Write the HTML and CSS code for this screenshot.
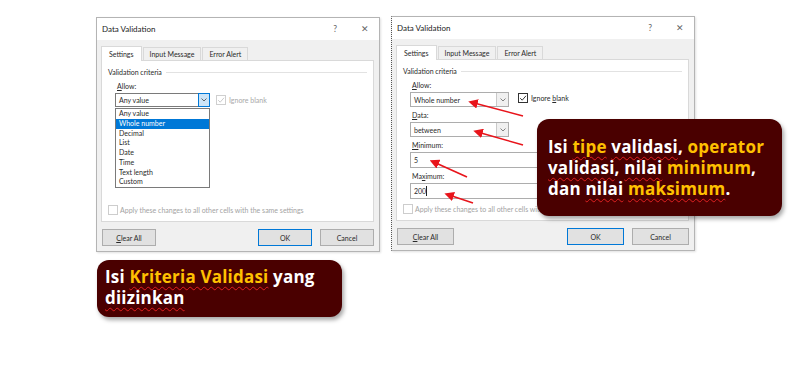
FILE: index.html
```html
<!DOCTYPE html>
<html lang="id">
<head>
    <meta charset="UTF-8">
    <meta name="viewport" content="width=device-width, initial-scale=1.0">
    <title>Data Validation</title>
    <link rel="stylesheet" href="styles.css">
</head>
<body>
<div class="page">
    <div class="left-col">
        <section class="dialog dialog-left">
            <header class="titlebar">
                <span class="title">Data Validation</span>
                <span class="title-btns"><span>?</span><span>&#x2715;</span></span>
            </header>
            <div class="dialog-body">
                <nav class="tabs">
                    <span class="tab active">Settings</span>
                    <span class="tab">Input Message</span>
                    <span class="tab">Error Alert</span>
                </nav>
                <div class="panel">
                    <div class="group-title"><span>Validation criteria</span><i></i></div>
                    <div class="fields">
                        <div class="label"><u>A</u>llow:</div>
                        <div class="row">
                            <div class="combo">
                                <div class="select open">
                                    <span>Any value</span>
                                    <span class="drop"><svg width="6" height="4" viewBox="0 0 6 4"><path d="M0.5 0.5 L3 3 L5.5 0.5" fill="none" stroke="#444" stroke-width="0.8"/></svg></span>
                                </div>
                                <ul class="listbox">
                                    <li>Any value</li>
                                    <li class="selected">Whole number</li>
                                    <li>Decimal</li>
                                    <li>List</li>
                                    <li>Date</li>
                                    <li>Time</li>
                                    <li>Text length</li>
                                    <li>Custom</li>
                                </ul>
                            </div>
                            <label class="check disabled">
                                <span class="box"><svg width="8" height="8" viewBox="0 0 8 8"><path d="M1.2 4.2 L3.2 6.2 L7 1.8" fill="none" stroke="#c4c4c4" stroke-width="0.9"/></svg></span>
                                <span>Ignore blank</span>
                            </label>
                        </div>
                    </div>
                    <div class="apply"><span class="box"></span><span>Apply these changes to all other cells with the same settings</span></div>
                </div>
                <div class="buttons">
                    <button class="btn"><u>C</u>lear All</button>
                    <span class="spacer"></span>
                    <button class="btn primary">OK</button>
                    <button class="btn">Cancel</button>
                </div>
            </div>
        </section>

        <div class="callout callout-left">
            Isi <span class="hl typo">Kriteria Validasi</span> yang<br>
            <span class="typo">diizinkan</span>
        </div>
    </div>

    <section class="dialog dialog-right">
        <header class="titlebar">
            <span class="title">Data Validation</span>
            <span class="title-btns"><span>?</span><span>&#x2715;</span></span>
        </header>
        <div class="dialog-body">
            <nav class="tabs">
                <span class="tab active">Settings</span>
                <span class="tab">Input Message</span>
                <span class="tab">Error Alert</span>
            </nav>
            <div class="panel">
                <div class="group-title"><span>Validation criteria</span><i></i></div>
                <div class="fields">
                    <div class="label"><u>A</u>llow:</div>
                    <div class="row">
                        <div class="select">
                            <span>Whole number</span>
                            <span class="drop"><svg width="6" height="4" viewBox="0 0 6 4"><path d="M0.5 0.5 L3 3 L5.5 0.5" fill="none" stroke="#666" stroke-width="0.8"/></svg></span>
                        </div>
                        <label class="check">
                            <span class="box"><svg width="8" height="8" viewBox="0 0 8 8"><path d="M1.2 4.2 L3.2 6.2 L7 1.8" fill="none" stroke="#222" stroke-width="0.9"/></svg></span>
                            <span>Ignore <u>b</u>lank</span>
                        </label>
                    </div>
                    <div class="label"><u>D</u>ata:</div>
                    <div class="select">
                        <span>between</span>
                        <span class="drop"><svg width="6" height="4" viewBox="0 0 6 4"><path d="M0.5 0.5 L3 3 L5.5 0.5" fill="none" stroke="#666" stroke-width="0.8"/></svg></span>
                    </div>
                    <div class="label"><u>M</u>inimum:</div>
                    <div class="input">5</div>
                    <div class="label">Ma<u>x</u>imum:</div>
                    <div class="input">200<span class="caret"></span></div>
                </div>
                <div class="apply"><span class="box"></span><span>Apply these changes to all other cells with the same settings</span></div>
            </div>
            <div class="buttons">
                <button class="btn"><u>C</u>lear All</button>
                <span class="spacer"></span>
                <button class="btn primary">OK</button>
                <button class="btn">Cancel</button>
            </div>
        </div>
    </section>

    <div class="callout callout-right">
        Isi <span class="hl typo">tipe</span> <span class="typo">validasi</span>, <span class="hl">operator</span><br>
        <span class="typo">validasi</span>, <span class="typo">nilai</span> <span class="hl">minimum</span>,<br>
        dan <span class="typo">nilai</span> <span class="hl typo">maksimum</span>.
    </div>

    <!-- red pointer arrows drawn over the right dialog -->
    <svg class="arrows" width="791" height="368" viewBox="0 0 791 368">
        <defs>
            <marker id="head" markerWidth="6" markerHeight="6" refX="1" refY="3" orient="auto" markerUnits="strokeWidth">
                <path d="M0 0 L6 3 L0 6 Z" fill="#e8141b"/>
            </marker>
        </defs>
        <g stroke="#e8141b" stroke-width="1.6" marker-end="url(#head)">
            <line x1="523" y1="116" x2="476" y2="103.5"/>
            <line x1="523" y1="145" x2="481" y2="133"/>
            <line x1="467" y1="177" x2="437" y2="163.5"/>
            <line x1="473" y1="203" x2="452" y2="196"/>
        </g>
    </svg>
</div>
</body>
</html>
```

FILE: styles.css
```css
* {
    box-sizing: border-box;
}
body {
    margin: 0;
    background: #fff;
    font-family: Lato, "Noto Sans", sans-serif;
}
.page {
    position: relative;
    width: 791px;
    height: 368px;
    padding: 17px 0 0 96px;
    display: flex;
    align-items: flex-start;
    gap: 11px;
}
.left-col {
    display: flex;
    flex-direction: column;
    gap: 8px;
}

/* dialog window */
.dialog {
    border: 1px solid #b4b4b4;
    background: #f0f0f0;
    font-size: 7px;
    color: #2a2a2a;
    box-shadow: 1px 1px 2px rgba(0, 0, 0, 0.12);
}
.dialog-left {
    width: 284px;
}
.dialog-right {
    width: 304px;
    margin-top: -1px;
    border-left: 1px dotted #555;
}
.titlebar {
    height: 22px;
    background: #fff;
    display: flex;
    align-items: center;
    justify-content: space-between;
    padding: 0 10px 0 5px;
}
.title {
    font-size: 8px;
    color: #222;
}
.title-btns {
    display: flex;
    gap: 24px;
    font-size: 8.5px;
    color: #666;
}
.dialog-body {
    padding: 6px 5px 5px 4px;
}
.tabs {
    display: flex;
    align-items: flex-end;
    height: 14px;
}
.tab {
    height: 13px;
    line-height: 12px;
    padding: 0 6px;
    border: 1px solid #d9d9d9;
    border-bottom: none;
    margin-right: 1px;
    background: #f0f0f0;
}
.tab.active {
    position: relative;
    z-index: 1;
    height: 15px;
    line-height: 14px;
    margin-bottom: -1px;
    background: #fff;
    padding: 0 7px;
}
.panel {
    height: 162px;
    background: #fff;
    border: 1px solid #d9d9d9;
    display: flex;
    flex-direction: column;
    padding: 5px 6px 6px 0;
}
.group-title {
    display: flex;
    align-items: center;
    gap: 4px;
    height: 12px;
    padding-left: 6px;
}
.group-title i {
    flex: 1;
    height: 1px;
    background: #e2e2e2;
}
.fields {
    padding-left: 13px;
}
.label {
    margin-top: 3px;
    line-height: 10px;
    padding-left: 2px;
    margin-bottom: 2px;
}
.row {
    display: flex;
    align-items: center;
    gap: 6px;
}
.combo {
    position: relative;
}
.select {
    width: 99px;
    height: 15px;
    border: 1px solid #adadad;
    background: #fff;
    display: flex;
    align-items: center;
    padding-left: 3px;
}
.dialog-left .select {
    width: 95px;
    height: 14px;
    border-color: #7a7a7a;
}
.drop {
    margin-left: auto;
    width: 12px;
    height: 100%;
    border-left: 1px solid #c9c9c9;
    background: #f0f0f0;
    display: flex;
    align-items: center;
    justify-content: center;
}
.select.open .drop {
    background: #cce4f7;
    border: 1px solid #0078d7;
    height: calc(100% + 2px);
    margin-right: -1px;
}
.listbox {
    position: absolute;
    left: 0;
    top: 15px;
    width: 95px;
    margin: 0;
    padding: 0;
    list-style: none;
    border: 1px solid #7a7a7a;
    background: #fff;
    z-index: 2;
}
.listbox li {
    line-height: 9.75px;
    padding-left: 3px;
}
.listbox li.selected {
    background: #0078d7;
    color: #fff;
}
.input {
    width: 271px;
    height: 16px;
    border: 1px solid #adadad;
    display: flex;
    align-items: center;
    padding-left: 3px;
}
.caret {
    width: 1px;
    height: 10px;
    background: #222;
}
.check {
    display: flex;
    align-items: center;
    gap: 3px;
}
.box {
    width: 10px;
    height: 10px;
    border: 1px solid #333;
    background: #fff;
    display: flex;
    align-items: center;
    justify-content: center;
}
.check.disabled {
    color: #a8a8a8;
}
.check.disabled .box {
    border-color: #cfcfcf;
}
.dialog-right .check {
    margin-left: 3px;
    margin-top: -4px;
}
.apply {
    margin-top: auto;
    display: flex;
    align-items: center;
    gap: 2px;
    padding-left: 6px;
    color: #a3a3a3;
}
.apply .box {
    border-color: #cdcdcd;
}
.buttons {
    display: flex;
    gap: 8px;
    margin-top: 7px;
    padding-left: 1px;
}
.spacer {
    flex: 1;
}
.btn {
    width: 54px;
    height: 17px;
    border: 1px solid #adadad;
    background: #e1e1e1;
    font: inherit;
    color: #2a2a2a;
    padding: 0;
}
.dialog-right .btn {
    width: 57px;
}
.btn.primary {
    border-color: #0078d7;
}

/* callouts */
.callout {
    background: #4a0000;
    color: #fff;
    font-family: "Open Sans", sans-serif;
    font-weight: 700;
    font-size: 17px;
    letter-spacing: 0.2px;
    line-height: 21px;
    white-space: nowrap;
    border-radius: 12px;
    box-shadow: 2px 3px 4px rgba(0, 0, 0, 0.35);
}
.callout-left {
    width: 245px;
    height: 57px;
    margin-left: 1px;
    padding: 6px 8px;
}
.callout-right {
    position: absolute;
    left: 537px;
    top: 119px;
    width: 245px;
    height: 97px;
    padding: 17px 11px;
}
.hl {
    color: #ffc000;
}
.typo {
    text-decoration: underline wavy #e02020;
    text-decoration-thickness: 1px;
    text-underline-offset: 3px;
}
.arrows {
    position: absolute;
    left: 0;
    top: 0;
    pointer-events: none;
}
```
